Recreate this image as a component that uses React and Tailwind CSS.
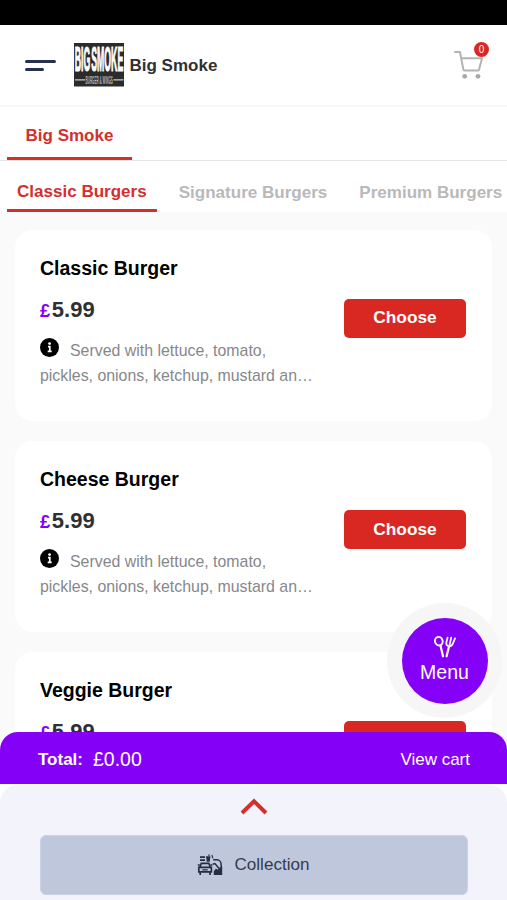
import { useState } from "react";

const categories = ["Classic Burgers", "Signature Burgers", "Premium Burgers"];

const items = [
  { id: 1, name: "Classic Burger", price: "5.99" },
  { id: 2, name: "Cheese Burger", price: "5.99" },
  { id: 3, name: "Veggie Burger", price: "5.99" },
];

function Logo() {
  return (
    <svg width="50" height="44" viewBox="0 0 50 44" className="shrink-0 overflow-visible">
      <rect width="50" height="43.5" fill="#2b2b2b" />
      <g fontFamily="Liberation Sans, sans-serif" fontWeight="700">
        <text
          transform="translate(0.7 28) scale(0.33 1.37)"
          fontSize="26"
          fill="#fff"
          stroke="#fff"
          strokeWidth="0.9"
          textLength="147"
          lengthAdjust="spacingAndGlyphs"
          wordSpacing="-4"
        >
          BIG SMOKE
        </text>
        <text
          transform="translate(11.5 40.7) scale(0.3 1)"
          fontSize="11"
          fill="#b5b5b5"
          textLength="91"
          lengthAdjust="spacingAndGlyphs"
        >
          BURGER &amp; WINGS
        </text>
      </g>
      <path d="M1 36.8h10M39.5 36.8h10" stroke="#ccc" strokeWidth="1.2" />
    </svg>
  );
}

function CartIcon() {
  return (
    <svg width="32" height="32" viewBox="0 0 32 32" fill="none">
      <path
        d="M2 3h5l3.4 17.6q.2.9 1.1.9h13.4q.9 0 1.2-.9L29 9.2H8.2"
        stroke="#b3b3b3"
        strokeWidth="2"
        strokeLinejoin="round"
        strokeLinecap="round"
      />
      <circle cx="11.7" cy="27.3" r="2.4" fill="#a9a9a9" />
      <circle cx="25" cy="27.3" r="2.4" fill="#a9a9a9" />
    </svg>
  );
}

function InfoIcon() {
  return (
    <svg width="19" height="19" viewBox="0 0 19 19" className="mr-[11px] inline-block align-[-1px]">
      <circle cx="9.5" cy="9.5" r="9.5" fill="#000" />
      <circle cx="9.6" cy="5.6" r="1.4" fill="#fff" />
      <path d="M8 8.6h1.8v4.8M7.7 13.3h4" stroke="#fff" strokeWidth="1.7" fill="none" />
    </svg>
  );
}

function SpoonForkIcon() {
  return (
    <svg width="22" height="22" viewBox="0 0 22 22" fill="none" stroke="#fff" strokeWidth="1.6" strokeLinecap="round">
      <ellipse cx="4.8" cy="5.2" rx="3.8" ry="4.3" strokeWidth="1.9" transform="rotate(-20 4.8 5.2)" />
      <path d="M6.5 9.6 9 20.3" strokeWidth="2.2" />
      <path d="M13.6 1.6 12.4 6.2c-.5 2.3.7 3.7 2.5 4 2 .3 3.3-.8 4-2.7L21 2.4" strokeWidth="1.8" />
      <path d="M17.2 1.6 15.6 8.8" strokeWidth="1.8" />
      <path d="M15 10.5 12.6 20.3" strokeWidth="2.2" />
    </svg>
  );
}

function CollectionIcon() {
  return (
    <svg width="26" height="22" viewBox="0 0 26 22" fill="none" stroke="#252d42" strokeWidth="1.7">
      <path d="M3 3.2h5M3 6.2h5" strokeWidth="1.8" />
      <path d="M9 2.2h4.4l-.7 5.6h-2.9z" fill="#252d42" stroke="none" />
      <path d="M12 2V.3M14.8 1l1.2 3.4" strokeWidth="1.1" />
      <path d="m3 13 1.3-3.7h7.5L13.3 13M1.8 13.3h12.6v4.5H1.8zM3.2 18v3M13 18v3" />
      <path d="M.8 11h2M13.4 11h2M5.3 15.8h5.4" strokeWidth="1.3" />
      <path d="M16.2 5.8h3.7c2.7 0 4.3 2.4 4.3 5.2v9M15.7 10.2l2.2-.7 4 4.7" strokeWidth="1.5" />
      <path d="M16.8 21v-3.8l2.2-2.6 1.6 1.2 2-2.4 2.6-.6V21z" fill="#252d42" stroke="none" />
    </svg>
  );
}

function ItemCard({ item }) {
  return (
    <div className="flex h-[191px] shrink-0 rounded-[18px] bg-white pl-[25px] pr-[26px]">
      <div className="w-[285px] pt-[25px]">
        <h2 className="text-[19.5px] leading-[26px] font-bold text-black">{item.name}</h2>
        <p className="mt-[14px] text-[22px] leading-[30px] font-bold text-[#303033]">
          <span className="mr-[1.5px] text-[18.5px] text-[#8500f7]">£</span>
          {item.price}
        </p>
        <p className="mt-[12px] text-[15.9px] leading-[25px] text-[#87878b]">
          <InfoIcon />
          Served with lettuce, tomato,
          <br />
          pickles, onions, ketchup, mustard an…
        </p>
      </div>
      <button className="mt-[69px] ml-auto h-[39px] w-[122px] rounded-[5px] bg-[#d92822] text-[17.3px] font-bold text-white">
        Choose
      </button>
    </div>
  );
}

export default function App() {
  const [active, setActive] = useState("Classic Burgers");

  return (
    <div className="relative flex h-[900px] w-[507px] flex-col overflow-hidden bg-white font-['Liberation_Sans',Arial,sans-serif]">
      <div className="h-[25px] shrink-0 bg-black" />

      <header className="flex h-[82px] shrink-0 items-center border-b-2 border-[#f7f7f7] pl-[25px] pr-[22px]">
        <div className="flex w-[49px] flex-col gap-[5px]">
          <span className="h-[3px] w-[31px] rounded-full bg-[#26314f]" />
          <span className="h-[3px] w-[19px] rounded-full bg-[#26314f]" />
        </div>
        <Logo />
        <h1 className="ml-[5.5px] pt-[2px] text-[17px] font-bold text-[#303033]">Big Smoke</h1>
        <div className="relative ml-auto">
          <CartIcon />
          <span className="absolute -top-[7px] left-[21px] flex size-[15px] items-center justify-center rounded-full bg-[#d92822] text-[10px] text-white">
            0
          </span>
        </div>
      </header>

      <nav className="flex h-[54px] shrink-0 border-b border-[#e4e4e4] pl-[7px]">
        <button className="h-[53px] w-[125px] border-b-[3px] border-[#d3302c] pt-[7px] text-[17px] font-bold text-[#d3302c]">
          Big Smoke
        </button>
      </nav>

      <nav className="flex h-[51px] shrink-0 gap-[12px] overflow-hidden pl-[7px]">
        {categories.map((category) => (
          <button
            key={category}
            onClick={() => setActive(category)}
            className={`shrink-0 border-b-[3px] px-[10px] text-[17.05px] font-bold whitespace-nowrap ${
              active === category
                ? "border-[#d3302c] pt-[13px] text-[#d3302c]"
                : "border-transparent pt-[15px] text-[#b9b9b9]"
            }`}
          >
            {category}
          </button>
        ))}
      </nav>

      <main className="flex min-h-0 flex-1 flex-col gap-[20.4px] overflow-hidden bg-[#fafafa] px-[15px] pt-[17.6px]">
        {items.map((item) => (
          <ItemCard key={item.id} item={item} />
        ))}
      </main>

      {/* Floating menu button */}
      <div className="absolute top-[603px] left-[387px] flex size-[115px] items-center justify-center rounded-full bg-[#f6f6f6]">
        <button className="flex size-[86px] flex-col items-center rounded-full bg-[#8500f7] pt-[18px] text-[19.5px] leading-[24px] text-white">
          <SpoonForkIcon />
          <span className="mt-[2px]">Menu</span>
        </button>
      </div>

      <footer className="relative -mt-[18px] shrink-0">
        <div className="flex h-[52px] items-center rounded-t-[18px] bg-[#8500f7] pt-[3px] pl-[38px] pr-[37px] text-white">
          <span className="text-[17px] font-bold">Total:</span>
          <span className="ml-[10px] text-[19.5px]">£0.00</span>
          <button className="ml-auto text-[17px]">View cart</button>
        </div>
        <div className="bg-white pt-[1px]">
          <div className="flex h-[115px] flex-col items-center rounded-t-[18px] bg-[#f2f3fb] pt-[13px]">
            <svg width="28" height="17" viewBox="0 0 28 17" fill="none" className="shrink-0">
              <path d="M2 15 14 3.2 26 15" stroke="#d3302c" strokeWidth="4" />
            </svg>
            <button className="mt-[20px] flex h-[60px] w-[428px] items-center justify-center gap-[11px] rounded-[6px] border border-[#ccd2e3] bg-[#bfc7dc] text-[17.1px] text-[#343b4c]">
              <CollectionIcon />
              Collection
            </button>
          </div>
        </div>
      </footer>
    </div>
  );
}
